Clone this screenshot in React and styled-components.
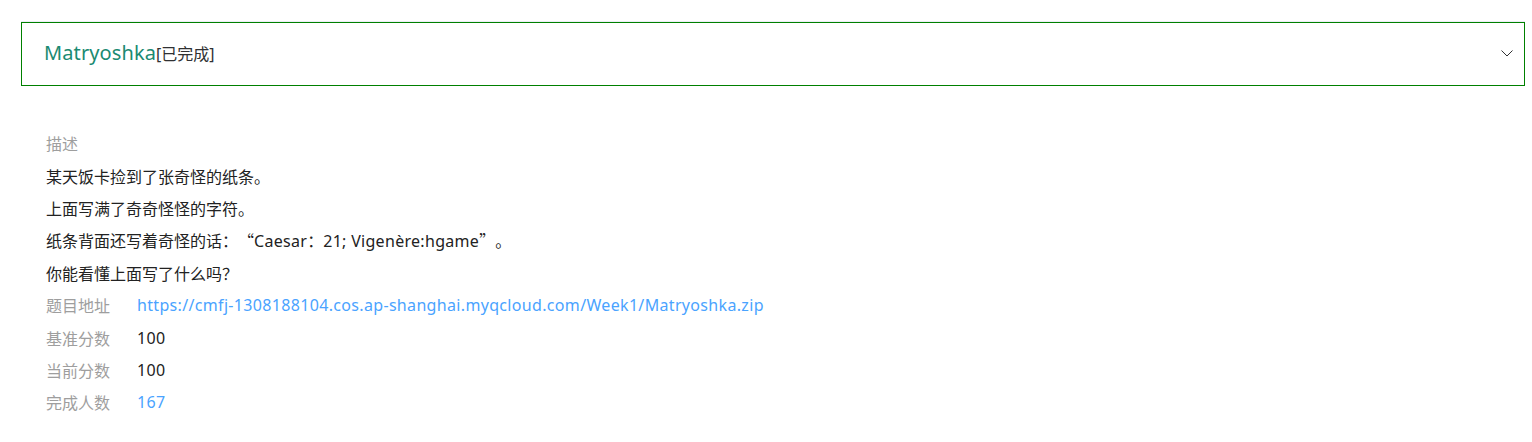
import React from "react"
import styled, { createGlobalStyle } from "styled-components"

const GlobalStyle = createGlobalStyle`
    body {
        margin: 0;
        background: #ffffff;
        font-family: "Noto Sans", "Noto Sans CJK SC", sans-serif;
    }
`

const challenge = {
    name: "Matryoshka",
    status: "[已完成]",
    url: "https://cmfj-1308188104.cos.ap-shanghai.myqcloud.com/Week1/Matryoshka.zip",
    base: 100,
    current: 100,
    solved: 167,
}

const App = () => (
    <Page>
        <GlobalStyle />
        <Collapse>
            <Header>
                <Title>
                    {challenge.name}
                    <Status>{challenge.status}</Status>
                </Title>
                <Chevron width="12" height="7" viewBox="0 0 12 7">
                    <polyline points="0.5,0.5 6,6 11.5,0.5" fill="none" stroke="#303133" strokeWidth="1" />
                </Chevron>
            </Header>
        </Collapse>
        <Body>
            <Row>
                <Label>描述</Label>
            </Row>
            <Row>
                <Text>某天饭卡捡到了张奇怪的纸条。</Text>
            </Row>
            <Row>
                <Text>上面写满了奇奇怪怪的字符。</Text>
            </Row>
            <Row>
                <Text>
                    纸条背面还写着奇怪的话：<Quote>“</Quote>
                    <Latin>Caesar</Latin>：<Latin>21; Vigenère:hgame</Latin>
                    <Quote>”</Quote>。
                </Text>
            </Row>
            <Row>
                <Text>你能看懂上面写了什么吗？</Text>
            </Row>
            <Row>
                <Label>题目地址</Label>
                <Link href={challenge.url}>{challenge.url}</Link>
            </Row>
            <Row>
                <Label>基准分数</Label>
                <Value>{challenge.base}</Value>
            </Row>
            <Row>
                <Label>当前分数</Label>
                <Value>{challenge.current}</Value>
            </Row>
            <Row>
                <Label>完成人数</Label>
                <Value $blue>{challenge.solved}</Value>
            </Row>
        </Body>
    </Page>
)

const Page = styled.div`
    padding: 21px 7px 20px 21px;
`

const Collapse = styled.div`
    border-top: 1px solid #ebeef5;
`

const Header = styled.div`
    display: flex;
    align-items: center;
    justify-content: space-between;
    height: 62px;
    border: 1px solid #008000;
    padding: 0 11px 0 22px;
`

const Title = styled.div`
    display: flex;
    align-items: baseline;
    margin-top: -3px;
    font-size: 20px;
    letter-spacing: 0.1px;
    color: #1b8a72;
`

const Status = styled.span`
    font-size: 16px;
    letter-spacing: 0;
    color: #303133;
`

const Chevron = styled.svg`
    display: block;
    margin-top: -1px;
`

const Body = styled.div`
    padding: 41px 0 0 25px;
    font-size: 16px;
    color: #222222;
`

const Row = styled.div`
    display: grid;
    grid-template-columns: 91px 1fr;
    height: 32.4px;
    align-items: center;
`

const Label = styled.span`
    color: #9e9e9e;
`

const Text = styled.span`
    grid-column: 1 / -1;
    white-space: pre;
`

const Quote = styled.span`
    display: inline-block;
    width: 1em;
    text-align: ${(p) => (p.children === "“" ? "right" : "left")};
    font-family: "Noto Sans CJK SC", sans-serif;
`

const Latin = styled.span`
    letter-spacing: 0.3px;
`

const Value = styled.span`
    letter-spacing: 0.3px;
    color: ${(p) => (p.$blue ? "#4aa3ff" : "#222222")};
`

const Link = styled.a`
    color: #4aa3ff;
    letter-spacing: 0.33px;
    text-decoration: none;
`

export default App
